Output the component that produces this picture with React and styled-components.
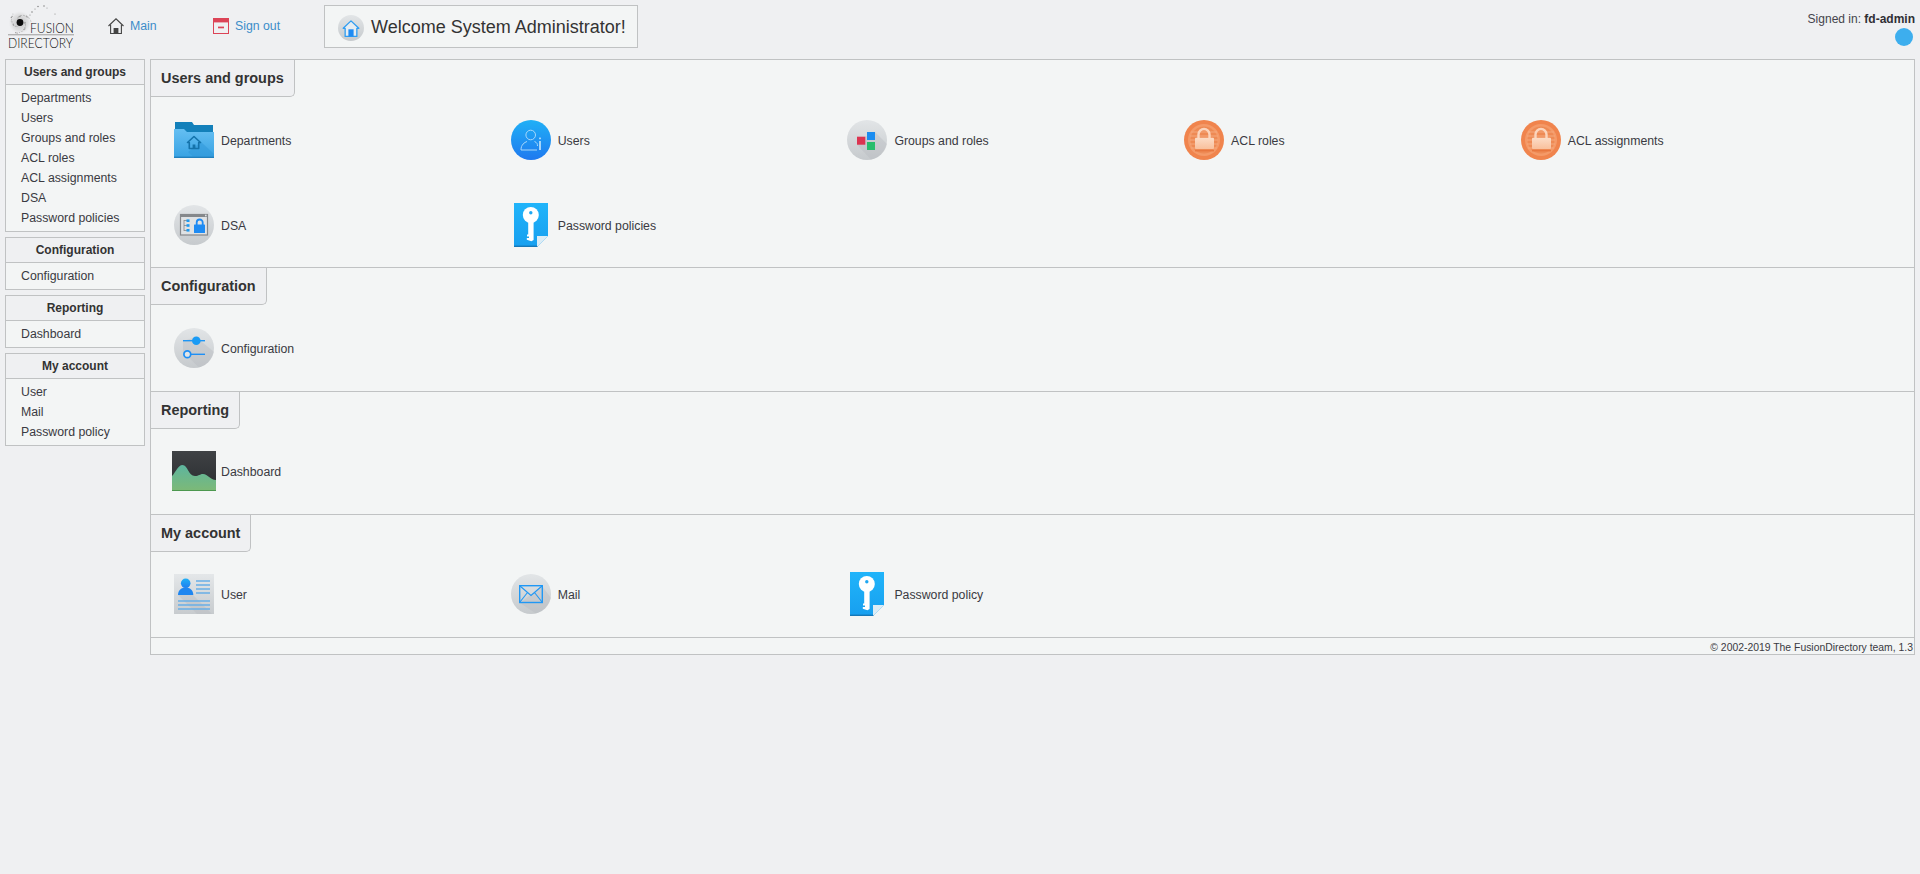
import styled, { createGlobalStyle } from 'styled-components'

const GlobalStyle = createGlobalStyle`
  html, body {
    margin: 0;
    padding: 0;
    background: #eff0f2;
    color: #38383f;
    font-family: "Liberation Sans", Arial, sans-serif;
  }
`

const Page = styled.div`
  min-height: 874px;
  background: #eff0f2;
`

const Header = styled.header`
  display: flex;
  align-items: flex-start;
  height: 59px;
  box-sizing: border-box;
  padding: 5px 5px 0 4px;
`

const LogoSlot = styled.div`
  width: 104px;
  height: 48px;
  flex: none;
`

const NavLink = styled.a`
  display: flex;
  align-items: center;
  gap: 6px;
  flex: none;
  width: ${(p) => p.$width}px;
  height: 16px;
  margin-top: 13px;
  font-size: 12.3px;
  color: #3c8dc9;
  text-decoration: none;
`

const NavLabel = styled.span`
  padding-bottom: 1px;
`

const Welcome = styled.div`
  display: flex;
  align-items: center;
  gap: 7px;
  flex: none;
  box-sizing: border-box;
  width: 314px;
  height: 43px;
  padding: 2px 0 0 13px;
  border: 1px solid #c0c2c3;
  background: #f3f5f5;
  font-size: 18px;
  color: #333;
`

const SignedIn = styled.div`
  display: flex;
  flex-direction: column;
  align-items: flex-end;
  margin-left: auto;
  padding-top: 7px;
  font-size: 12px;
  line-height: 14px;
  color: #44444c;
  b {
    color: #2f2f35;
  }
`

const StatusDot = styled.span`
  display: block;
  width: 18px;
  height: 18px;
  margin: 2px 2px 0 0;
  border-radius: 50%;
  background: #3daeee;
`

const Body = styled.div`
  display: flex;
  align-items: flex-start;
  gap: 5px;
  padding: 0 5px;
`

const Sidebar = styled.nav`
  display: flex;
  flex-direction: column;
  gap: 5px;
  flex: none;
  width: 140px;
`

const MenuBox = styled.div`
  border: 1px solid #c0c2c3;
  background: #f3f5f5;
`

const MenuTitle = styled.div`
  height: 24px;
  border-bottom: 1px solid #c0c2c3;
  background: #eff0f2;
  font-size: 12px;
  font-weight: bold;
  line-height: 25px;
  text-align: center;
  color: #333;
`

const MenuList = styled.div`
  padding: 3px 0 3px 15px;
`

const MenuItem = styled.a`
  display: block;
  height: 20px;
  font-size: 12.3px;
  line-height: 20px;
  color: #3a3a42;
`

const Panel = styled.main`
  flex: 1;
  min-width: 0;
  border: 1px solid #c0c2c3;
  background: #f3f5f5;
`

const Section = styled.section`
  border-top: ${(p) => (p.$first ? 'none' : '1px solid #c0c2c3')};
`

const Tab = styled.h2`
  display: block;
  width: fit-content;
  box-sizing: border-box;
  height: 37px;
  margin: 0;
  padding: 0 10px;
  border-right: 1px solid #c0c2c3;
  border-bottom: 1px solid #c0c2c3;
  border-bottom-right-radius: 5px;
  background: #eff0f2;
  font-size: 14.45px;
  font-weight: bold;
  line-height: 36px;
  color: #333;
`

const Grid = styled.div`
  display: grid;
  grid-template-columns: repeat(5, 336.7px);
  grid-auto-rows: 40px;
  row-gap: 45px;
  padding: 22.52px 0 22.8px 21px;
`

const Entry = styled.a`
  display: flex;
  align-items: center;
  gap: 5px;
  font-size: 12.3px;
  color: #3a3a42;
`

const EntryLabel = styled.span`
  padding-top: 2px;
`

const IconSlot = styled.span`
  display: flex;
  align-items: center;
  justify-content: center;
  flex: none;
  width: 44px;
  height: 40px;
`

const Footer = styled.footer`
  box-sizing: border-box;
  height: 17px;
  border-top: 1px solid #c0c2c3;
  padding: 2px 1px 0 0;
  font-size: 10.4px;
  line-height: 16px;
  text-align: right;
  color: #3a3a42;
`

const Drawing = styled.svg`
  display: block;
  flex: none;
  overflow: visible;
`

const GreyDisc = () => (
  <>
    <defs>
      <linearGradient id="grey" x1="0" y1="0" x2="0" y2="1">
        <stop offset="0" stopColor="#e2e5e7" />
        <stop offset="1" stopColor="#c6cacd" />
      </linearGradient>
    </defs>
    <circle cx="20" cy="20" r="20" fill="url(#grey)" />
  </>
)

const FolderIcon = () => (
  <Drawing width="40" height="36" viewBox="0 0 40 36">
    <defs>
      <linearGradient id="folder" x1="0" y1="0" x2="0" y2="1">
        <stop offset="0" stopColor="#65bff2" />
        <stop offset="1" stopColor="#37a2e3" />
      </linearGradient>
    </defs>
    <path d="M1 0H18L20 3H39V12H1Z" fill="#1380ba" />
    <path d="M0 7H10L13 10H40V36H0Z" fill="url(#folder)" />
    <path d="M14 30L27 20L40 32V34.5H19Z" fill="#2f97d8" opacity=".55" />
    <rect y="34.6" width="40" height="1.4" fill="#2180bd" />
    <path d="M20 14.5L26.5 20.5H24.7V26.5H15.3V20.5H13.5Z" fill="none" stroke="#1473ab" strokeWidth="1.6" strokeLinejoin="round" />
    <rect x="18.6" y="22.5" width="2.8" height="4" fill="#1473ab" />
  </Drawing>
)

const UsersIcon = () => (
  <Drawing width="40" height="40" viewBox="0 0 40 40">
    <defs>
      <linearGradient id="blueDisc" x1="0" y1="0" x2="0" y2="1">
        <stop offset="0" stopColor="#20b0f6" />
        <stop offset="1" stopColor="#1f79ef" />
      </linearGradient>
    </defs>
    <circle cx="20" cy="20" r="20" fill="url(#blueDisc)" />
    <g fill="none" stroke="#a8d8fa" strokeWidth="1">
      <circle cx="19.7" cy="15" r="4.8" />
      <path d="M10 30C10 24.5 13.5 22.5 16 21.5M23.5 21.5C26 22.5 26.5 24 26.5 26M10 30H26" />
    </g>
    <path d="M29 21V30" stroke="#c8e8fc" strokeWidth="1.6" />
    <rect x="28.2" y="17.6" width="1.6" height="1.6" fill="#c8e8fc" />
  </Drawing>
)

const GroupsIcon = () => (
  <Drawing width="40" height="40" viewBox="0 0 40 40">
    <GreyDisc />
    <path d="M10 24.7L18 16.7L28 12L40 24A20 20 0 0 1 24 39.6Z" fill="#b4b8bc" opacity=".35" />
    <rect x="10" y="16.7" width="8.3" height="8" fill="#dc3450" />
    <rect x="20" y="12" width="8" height="8" fill="#1a8cf0" />
    <rect x="20" y="22" width="8" height="8" fill="#27bd6c" />
  </Drawing>
)

const LockIcon = () => (
  <Drawing width="40" height="40" viewBox="0 0 40 40">
    <defs>
      <linearGradient id="lockBody" x1="0" y1="0" x2="0" y2="1">
        <stop offset="0" stopColor="#fcdcc6" />
        <stop offset="1" stopColor="#f9c09c" />
      </linearGradient>
    </defs>
    <circle cx="20" cy="20" r="20" fill="#f0844d" />
    <circle cx="20" cy="20" r="16" fill="#f49a68" />
    <circle cx="20" cy="20" r="13.5" fill="#ee8a54" />
    <path d="M7 12H33M6 16H34M6 20H34M6 24H34M7 28H33" stroke="#f5a87c" strokeWidth="1" />
    <path d="M14.5 18V14.5A5.5 5.5 0 0 1 25.5 14.5V18" fill="none" stroke="#fbd5bd" strokeWidth="2.4" />
    <rect x="11" y="17.7" width="19" height="11.3" rx="1" fill="url(#lockBody)" />
    <rect x="11" y="30" width="19" height="1.4" fill="#e8773f" />
  </Drawing>
)

const DsaIcon = () => (
  <Drawing width="40" height="40" viewBox="0 0 40 40">
    <GreyDisc />
    <rect x="6.5" y="9.5" width="27" height="20.5" fill="#dfe2e4" stroke="#85888b" strokeWidth="1.2" />
    <rect x="6" y="9" width="28" height="3" fill="#85888b" />
    <rect x="31" y="9.7" width="1.6" height="1.6" fill="#dfe2e4" />
    <path d="M10 15V26M10 15.5H13M10 20.5H13M10 25.5H13" stroke="#85888b" strokeWidth=".8" fill="none" />
    <rect x="12.5" y="14.4" width="3" height="2.6" fill="#1e9af0" />
    <rect x="12.5" y="19.2" width="3" height="2.6" fill="#1e9af0" />
    <rect x="12.5" y="24" width="3" height="2.6" fill="#1e9af0" />
    <path d="M22.7 20V17.5A3 3 0 0 1 28.7 17.5V20" fill="none" stroke="#1e8bf3" strokeWidth="1.8" />
    <rect x="20" y="19.5" width="11" height="8.5" rx=".6" fill="#1e8bf3" />
  </Drawing>
)

const KeyIcon = () => (
  <Drawing width="34" height="44" viewBox="0 0 34 44" style={{ margin: '-2px 0' }}>
    <defs>
      <linearGradient id="keyPage" x1="0" y1="0" x2="0" y2="1">
        <stop offset="0" stopColor="#20b4fa" />
        <stop offset="1" stopColor="#179fef" />
      </linearGradient>
    </defs>
    <path d="M0 0H34V33L23 44H0Z" fill="url(#keyPage)" />
    <path d="M0 42.6H24V44H0Z" fill="#1578b8" />
    <path d="M14.2 18H19.6V37L17.4 38.2L12.8 36.8V35H15V33.4H13V31.6H14.2Z" fill="#fff" />
    <circle cx="16.8" cy="12" r="8" fill="#fff" />
    <circle cx="16.8" cy="9.8" r="1.7" fill="#1fa7f2" />
    <path d="M23 33H34L23 44Z" fill="#dcecf5" />
  </Drawing>
)

const ConfigIcon = () => (
  <Drawing width="40" height="40" viewBox="0 0 40 40">
    <GreyDisc />
    <path d="M9 13L22 9L40 24A20 20 0 0 1 25 39.4L9 24Z" fill="#b4b8bc" opacity=".35" />
    <path d="M9 12.7H31" stroke="#1e96f5" strokeWidth="1.4" />
    <circle cx="22.3" cy="12.7" r="4.3" fill="#1a9bf5" />
    <path d="M16 26.3H31" stroke="#1e8ff5" strokeWidth="1.4" />
    <circle cx="13.3" cy="26.3" r="3.4" fill="#e2e5e7" stroke="#1e8ff5" strokeWidth="1.7" />
  </Drawing>
)

const DashboardIcon = () => (
  <Drawing width="44" height="40" viewBox="0 0 44 40">
    <defs>
      <linearGradient id="dashSky" x1="0" y1="0" x2="0" y2="1">
        <stop offset="0" stopColor="#3f4245" />
        <stop offset="1" stopColor="#2a2c2f" />
      </linearGradient>
      <linearGradient id="dashHill" x1="0" y1="0" x2="0" y2="1">
        <stop offset="0" stopColor="#5db59f" />
        <stop offset="1" stopColor="#7db976" />
      </linearGradient>
    </defs>
    <rect width="44" height="40" fill="url(#dashSky)" />
    <path d="M0 25C4 21 6 14 10.5 14C16 14 16 25 23 25C27 25 28 23 31 23C36 23 38 29 44 29V40H0Z" fill="url(#dashHill)" />
    <rect y="39" width="44" height="1" fill="#4c984f" />
  </Drawing>
)

const UserCardIcon = () => (
  <Drawing width="40" height="40" viewBox="0 0 40 40">
    <defs>
      <linearGradient id="card" x1="0" y1="0" x2="0" y2="1">
        <stop offset="0" stopColor="#e4e7e9" />
        <stop offset="1" stopColor="#c7cbce" />
      </linearGradient>
      <linearGradient id="cardPerson" x1="0" y1="0" x2="0" y2="1">
        <stop offset="0" stopColor="#20b0f6" />
        <stop offset="1" stopColor="#1f7eef" />
      </linearGradient>
    </defs>
    <rect width="40" height="40" fill="url(#card)" />
    <path d="M4 21L19 21L38 40H23Z" fill="#b4b8bc" opacity=".35" />
    <circle cx="11.7" cy="9.3" r="4.8" fill="url(#cardPerson)" />
    <path d="M4 21C4 16 7.5 13.5 11.7 13.5C15.9 13.5 19.3 16 19.3 21Z" fill="#1f86f0" />
    <path d="M22 7H36M22 11H36M22 15H36M22 19H36M4 27H36M4 31H36M4 35H36" stroke="#68aee6" strokeWidth="1.7" />
  </Drawing>
)

const MailIcon = () => (
  <Drawing width="40" height="40" viewBox="0 0 40 40">
    <GreyDisc />
    <path d="M9 29L31 12L40 24A20 20 0 0 1 25 39.4Z" fill="#b4b8bc" opacity=".35" />
    <rect x="8.7" y="11.7" width="22.6" height="16.8" fill="none" stroke="#2098f5" strokeWidth="1.4" />
    <path d="M9 12L20 21.5L31 12M9 28L16.5 18.5M31 28L23.5 18.5" fill="none" stroke="#2098f5" strokeWidth="1.1" />
  </Drawing>
)

const MainIcon = () => (
  <Drawing width="16" height="16" viewBox="0 0 16 16">
    <path d="M.5 8L8 .8L15.5 8" fill="none" stroke="#444" strokeWidth="1.1" />
    <path d="M2.6 6.8V15.5H13.4V6.8" fill="none" stroke="#444" strokeWidth="1.1" />
    <rect x="5.6" y="10" width="4.8" height="5.5" fill="#444" />
  </Drawing>
)

const SignOutIcon = () => (
  <Drawing width="16" height="16" viewBox="0 0 16 16">
    <rect x=".5" y=".5" width="15" height="15" fill="none" stroke="#dc4457" />
    <rect width="16" height="4.4" fill="#dc4457" />
    <rect x="5" y="8.6" width="6" height="1.7" fill="#dc4457" />
  </Drawing>
)

const WelcomeIcon = () => (
  <Drawing width="26" height="26" viewBox="0 0 40 40">
    <GreyDisc />
    <path d="M20 9L32 20.5H29V33H11V20.5H8Z" fill="#e6edf2" stroke="#2f9df2" strokeWidth="2" strokeLinejoin="round" />
    <rect x="16" y="22" width="8" height="11" fill="#1e8bf3" />
  </Drawing>
)

// dandelion seeds, spread round the ball with a fixed step
const ballDots = Array.from({ length: 40 }, (_, i) => {
  const angle = i * 2.4
  const radius = 5 + (i % 7) * 1
  return [16 + Math.cos(angle) * radius, 17.5 + Math.sin(angle) * radius, i % 3 === 0 ? 0.7 : 0.45]
})

const flyingDots = [[26, 10, .6], [28, 7, .8], [31, 4, .6], [34, 1.5, .8], [40, 1, .8], [43, 3, .5], [51, 9, .6]]

const Logo = () => (
  <Drawing width="72" height="48" viewBox="0 0 72 48">
    <defs>
      <radialGradient id="ballHalo">
        <stop offset="0" stopColor="#a8a8a8" stopOpacity=".7" />
        <stop offset=".7" stopColor="#cfcfcf" stopOpacity=".5" />
        <stop offset="1" stopColor="#e0e0e0" stopOpacity="0" />
      </radialGradient>
    </defs>
    <circle cx="16" cy="17.5" r="11.5" fill="url(#ballHalo)" />
    {ballDots.map(([cx, cy, r], i) => (
      <circle key={i} cx={cx} cy={cy} r={r} fill="#9a9a9a" />
    ))}
    {flyingDots.map(([cx, cy, r], i) => (
      <circle key={i} cx={cx} cy={cy} r={r} fill="#8a8a8a" />
    ))}
    <circle cx="16" cy="17.5" r="3.4" fill="#0c0c0c" />
    <rect x="4" y="29" width="66" height="1.4" fill="#b4b4b4" />
    <text x="26" y="28" fontFamily="Lato, sans-serif" fontWeight="300" fontSize="14.5" textLength="44" lengthAdjust="spacingAndGlyphs" fill="#111">FUSION</text>
    <text x="4" y="43" fontFamily="Lato, sans-serif" fontWeight="300" fontSize="14.5" textLength="65" lengthAdjust="spacingAndGlyphs" fill="#111">DIRECTORY</text>
  </Drawing>
)

const sections = [
  {
    title: 'Users and groups',
    items: [
      ['Departments', FolderIcon],
      ['Users', UsersIcon],
      ['Groups and roles', GroupsIcon],
      ['ACL roles', LockIcon],
      ['ACL assignments', LockIcon],
      ['DSA', DsaIcon],
      ['Password policies', KeyIcon],
    ],
  },
  { title: 'Configuration', items: [['Configuration', ConfigIcon]] },
  { title: 'Reporting', items: [['Dashboard', DashboardIcon]] },
  {
    title: 'My account',
    items: [
      ['User', UserCardIcon],
      ['Mail', MailIcon],
      ['Password policy', KeyIcon],
    ],
  },
]

export default function App() {
  return (
    <Page>
      <GlobalStyle />
      <Header>
        <LogoSlot><Logo /></LogoSlot>
        <NavLink $width={105}><MainIcon /> <NavLabel>Main</NavLabel></NavLink>
        <NavLink $width={111}><SignOutIcon /> <NavLabel>Sign out</NavLabel></NavLink>
        <Welcome><WelcomeIcon /> Welcome System Administrator!</Welcome>
        <SignedIn>
          <span>Signed in: <b>fd-admin</b></span>
          <StatusDot />
        </SignedIn>
      </Header>
      <Body>
        <Sidebar>
          {sections.map((section) => (
            <MenuBox key={section.title}>
              <MenuTitle>{section.title}</MenuTitle>
              <MenuList>
                {section.items.map(([label]) => (
                  <MenuItem key={label}>{label}</MenuItem>
                ))}
              </MenuList>
            </MenuBox>
          ))}
        </Sidebar>
        <Panel>
          {sections.map((section, i) => (
            <Section key={section.title} $first={i === 0}>
              <Tab>{section.title}</Tab>
              <Grid>
                {section.items.map(([label, Icon]) => (
                  <Entry key={label}>
                    <IconSlot><Icon /></IconSlot>
                    <EntryLabel>{label}</EntryLabel>
                  </Entry>
                ))}
              </Grid>
            </Section>
          ))}
          <Footer>© 2002-2019 The FusionDirectory team, 1.3</Footer>
        </Panel>
      </Body>
    </Page>
  )
}
